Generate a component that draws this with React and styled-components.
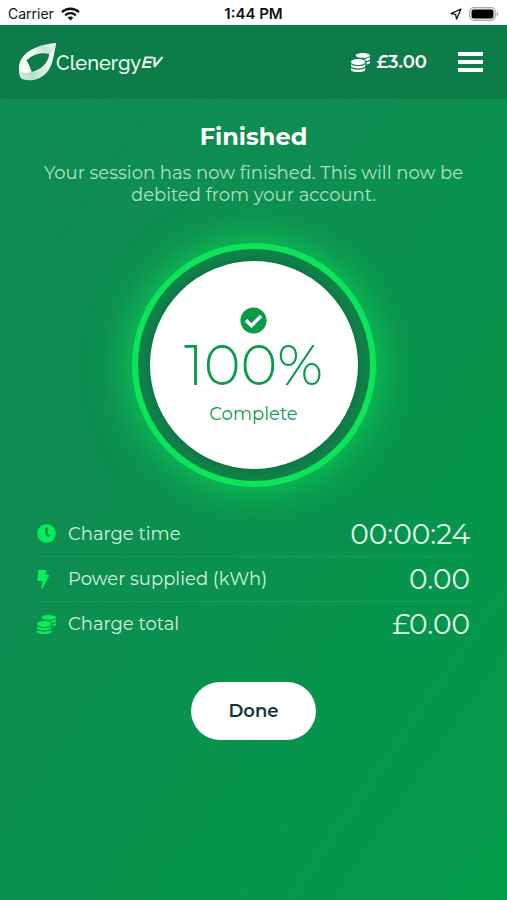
import React from "react";
import styled, { createGlobalStyle } from "styled-components";
import { FaCheckCircle, FaClock, FaCoins } from "react-icons/fa";

const GlobalStyle = createGlobalStyle`
  *, *::before, *::after { box-sizing: border-box; }
  body {
    margin: 0;
    background: #07944c;
    font-family: Montserrat, Inter, "Open Sans", sans-serif;
    -webkit-font-smoothing: antialiased;
  }
`;

const Screen = styled.div`
  display: flex;
  flex-direction: column;
  min-height: 100vh;
  color: #fff;
  background: linear-gradient(125deg, #108c52 0%, #0d8e50 40%, #07944c 70%, #009b49 100%);
`;

const StatusBar = styled.div`
  display: grid;
  grid-template-columns: 1fr auto 1fr;
  align-items: center;
  height: 25px;
  padding: 2px 8px 0;
  background: #fff;
  color: #111;
  font-family: Inter, "Liberation Sans", sans-serif;
  font-size: 14px;
  line-height: 20px;
`;

const StatusGroup = styled.div`
  display: flex;
  align-items: center;
  gap: 7px;
  justify-content: ${(p) => (p.$end ? "flex-end" : "flex-start")};
  svg { display: block; }
`;

const Clock = styled.time`
  font-size: 15px;
  font-weight: 600;
`;

const Header = styled.header`
  display: flex;
  align-items: center;
  justify-content: space-between;
  height: 74px;
  padding: 0 24px 0 18px;
  background: #0c7c48;
`;

const Brand = styled.a`
  display: flex;
  align-items: center;
  color: #eafff2;
  text-decoration: none;
  svg { display: block; }
`;

const BrandName = styled.span`
  padding-top: 2px;
  font-family: Raleway, Lato, sans-serif;
  font-size: 20px;
  line-height: 24px;
  font-weight: 500;
`;

const HeaderActions = styled.div`
  display: flex;
  align-items: center;
  gap: 31px;
`;

const Balance = styled.span`
  display: flex;
  align-items: center;
  gap: 6px;
  font-size: 18px;
  font-weight: 600;
  svg { display: block; }
`;

const MenuButton = styled.button`
  padding: 0;
  border: 0;
  background: none;
  color: #fff;
  cursor: pointer;
  svg { display: block; }
`;

const Content = styled.main`
  display: flex;
  flex-direction: column;
  align-items: center;
  padding: 22px 36px 40px;
`;

const Title = styled.h1`
  margin: 0;
  font-size: 24px;
  line-height: 32px;
  font-weight: 700;
`;

const Message = styled.p`
  max-width: 440px;
  margin: 9px 0 0;
  color: #b0e1c6;
  font-size: 18px;
  line-height: 22px;
  text-align: center;
`;

const Ring = styled.section`
  display: grid;
  place-items: center;
  width: 244px;
  height: 244px;
  margin-top: 37px;
  border: 6px solid #0ce45a;
  border-radius: 50%;
  background: #108249;
  box-shadow: 0 0 44px 2px rgba(12, 232, 88, 0.75);
`;

const Disc = styled.div`
  display: flex;
  flex-direction: column;
  align-items: center;
  width: 208px;
  height: 208px;
  padding-top: 46px;
  border-radius: 50%;
  background: #fff;
  color: #0c9a4b;
  box-shadow: 0 0 10px rgba(0, 70, 35, 0.35);
`;

const Percent = styled.strong`
  font-size: 56px;
  line-height: 62px;
  font-weight: 300;
`;

const RingLabel = styled.span`
  margin-top: 4px;
  font-size: 18px;
  line-height: 28px;
`;

const Stats = styled.dl`
  width: 100%;
  margin: 24px 0 0;
`;

const StatRow = styled.div`
  display: flex;
  align-items: center;
  height: 45px;
  padding: 0 1px;
  & + & { border-top: 1px solid #179a5a; }
`;

const StatName = styled.dt`
  display: flex;
  align-items: center;
  flex: 1;
  color: #d5f2e0;
  font-size: 18px;
`;

const StatIcon = styled.span`
  width: 31px;
  color: #07ee5d;
  svg { display: block; }
`;

const StatValue = styled.dd`
  margin: 0;
  color: #e4fbec;
  font-size: 28px;
  line-height: 36px;
  font-weight: 400;
`;

const DoneButton = styled.button`
  height: 58px;
  margin-top: 36px;
  padding: 0 37px;
  border: 0;
  border-radius: 29px;
  background: #fff;
  color: #12343b;
  font: inherit;
  font-size: 18px;
  font-weight: 600;
  cursor: pointer;
`;

const WifiIcon = () => (
  <svg width="19" height="14" viewBox="0 0 19 14" fill="none" stroke="currentColor" strokeWidth="2.3" aria-hidden="true">
    <path d="M1 5.1C5.8.6 13.2.6 18 5.1" />
    <path d="M4.1 8.3c3.1-2.9 7.7-2.9 10.8 0" />
    <path d="M6.7 10.7c1.6-1.5 4-1.5 5.6 0L9.5 13.6z" fill="currentColor" stroke="none" />
  </svg>
);

const LocationIcon = () => (
  <svg width="12" height="12" viewBox="0 0 12 12" fill="none" stroke="currentColor" strokeWidth="1.3" strokeLinejoin="round" aria-hidden="true">
    <path d="M11 1 1 5.6l4.6.7.9 4.7z" />
  </svg>
);

const BatteryIcon = () => (
  <svg width="30" height="14" viewBox="0 0 30 14" aria-hidden="true">
    <rect x=".7" y=".7" width="25.6" height="12.6" rx="4" fill="#eee" stroke="#aaa" strokeWidth="1.2" />
    <rect x="2.6" y="2.4" width="21.8" height="9.2" rx="2" fill="#000" />
    <path d="M27.6 4.8c2 .6 2 3.8 0 4.4z" fill="#aaa" />
  </svg>
);

const BoltIcon = ({ size, ...rest }) => (
  <svg width={size} height={size} viewBox="0 0 19 19" fill="currentColor" {...rest}>
    <path d="M2 0h6.600q.9 0 .7.900L8.300 4.800h3.200q1.100 0 .6 1L5.600 18.400q-.4.600-.9.500-.6-.2-.4-.9L5.500 11H1.300q-1 0-.9-1L1.200.900Q1.300 0 2 0z" />
  </svg>
);

const LeafLogo = () => (
  <svg width="38" height="38" viewBox="0 0 38 38" aria-hidden="true">
    <defs>
      <linearGradient id="leafTop" x1="0" y1="1" x2="1" y2="0">
        <stop offset="0" stopColor="#fff" />
        <stop offset=".5" stopColor="#f2fbf5" />
        <stop offset=".75" stopColor="#c4e4d2" />
        <stop offset="1" stopColor="#fff" />
      </linearGradient>
      <linearGradient id="leafBase" x1="0" y1="0" x2="1" y2="0">
        <stop offset="0" stopColor="#d4ecdf" />
        <stop offset=".35" stopColor="#b5dfc6" />
        <stop offset="1" stopColor="#fff" />
      </linearGradient>
    </defs>
    <path d="M38.500 0C25 1 11 5 4 15-.2 21 .6 28 2.500 34L14 29.500 9 17C15 11 24 9 31 11z" fill="url(#leafTop)" />
    <path d="M38.500 0C35.500 10 36 20 30 28 24 36 13 39.500 4 36 1.400 34 1 30 1.300 26.500 4 30 9 31 14 28.500 23 26 30 20 31 11z" fill="url(#leafBase)" />
    <path d="M8.500 17.500C14 13 23 11.300 31 12 29.500 20 24 25.500 14.300 28.800 13 25 11.500 21.500 8.500 17.500z" fill="#0c7c48" />
  </svg>
);

const EvMark = () => (
  <svg width="23" height="14" viewBox="0 0 23 14" fill="none" stroke="currentColor" strokeWidth="2.200" role="img" aria-label="EV">
    <path d="M12 2.500H4.500L2 12h8M3.500 7.200h7" />
    <path d="M13.500 2v9.500L21.500 2" strokeLinejoin="bevel" />
  </svg>
);

const MenuIcon = () => (
  <svg width="25" height="20" viewBox="0 0 25 20" fill="currentColor" aria-hidden="true">
    <path d="M0 0h25v4H0zM0 8h25v4H0zM0 16h25v4H0z" />
  </svg>
);

const stats = [
  { name: "Charge time", value: "00:00:24", Icon: FaClock },
  { name: "Power supplied (kWh)", value: "0.00", Icon: BoltIcon },
  { name: "Charge total", value: "£0.00", Icon: FaCoins },
];

export default function App() {
  return (
    <Screen>
      <GlobalStyle />
      <StatusBar>
        <StatusGroup>
          Carrier
          <WifiIcon />
        </StatusGroup>
        <Clock>1:44 PM</Clock>
        <StatusGroup $end>
          <LocationIcon />
          <BatteryIcon />
        </StatusGroup>
      </StatusBar>
      <Header>
        <Brand href="#home">
          <LeafLogo />
          <BrandName>Clenergy</BrandName>
          <EvMark />
        </Brand>
        <HeaderActions>
          <Balance>
            <FaCoins size={19} aria-hidden="true" />
            £3.00
          </Balance>
          <MenuButton type="button" aria-label="Menu">
            <MenuIcon />
          </MenuButton>
        </HeaderActions>
      </Header>
      <Content>
        <Title>Finished</Title>
        <Message>
          Your session has now finished. This will now be debited from your account.
        </Message>
        <Ring>
          <Disc>
            <FaCheckCircle size={27} aria-hidden="true" />
            <Percent>100%</Percent>
            <RingLabel>Complete</RingLabel>
          </Disc>
        </Ring>
        <Stats>
          {stats.map(({ name, value, Icon }) => (
            <StatRow key={name}>
              <StatName>
                <StatIcon>
                  <Icon size={19} aria-hidden="true" />
                </StatIcon>
                {name}
              </StatName>
              <StatValue>{value}</StatValue>
            </StatRow>
          ))}
        </Stats>
        <DoneButton type="button">Done</DoneButton>
      </Content>
    </Screen>
  );
}
